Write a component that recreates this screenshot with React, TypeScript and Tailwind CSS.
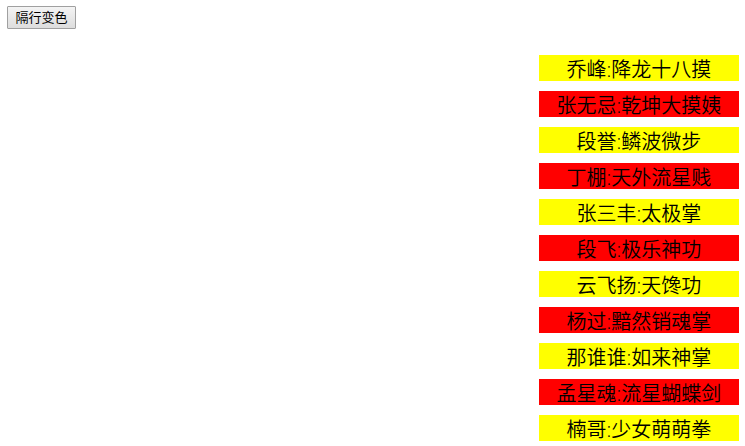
import { useState } from "react";

const heroes = [
  "乔峰:降龙十八摸",
  "张无忌:乾坤大摸姨",
  "段誉:鳞波微步",
  "丁棚:天外流星贱",
  "张三丰:太极掌",
  "段飞:极乐神功",
  "云飞扬:天馋功",
  "杨过:黯然销魂掌",
  "那谁谁:如来神掌",
  "孟星魂:流星蝴蝶剑",
  "楠哥:少女萌萌拳",
];

const App: React.FC = () => {
  const [striped, setStriped] = useState(true);

  const rowColor = (index: number) => {
    if (!striped) return "";
    return index % 2 === 0 ? "bg-[#ffff00]" : "bg-[#ff0000]";
  };

  return (
    <div className="bg-white text-black font-['Open_Sans','Noto_Sans_CJK_SC',sans-serif]">
      <div className="px-[7px] pt-[6px]">
        <button
          type="button"
          onClick={() => setStriped(true)}
          className="
            block
            w-[69px]
            h-[23px]
            border
            border-[#a0a0a0]
            rounded-[1px]
            bg-linear-to-b
            from-[#f4f4f4]
            to-[#dddddd]
            text-[13px]
            leading-[21px]
          "
        >
          隔行变色
        </button>
      </div>
      <ul className="ml-auto mr-[6px] mt-[26px] w-[200px] flex flex-col gap-[10px] font-[350]">
        {heroes.map((hero, index) => (
          <li
            key={hero}
            className={`pt-[4px] text-center text-[20px] leading-[22px] ${rowColor(index)}`}
          >
            {hero}
          </li>
        ))}
      </ul>
    </div>
  );
};

export default App;
